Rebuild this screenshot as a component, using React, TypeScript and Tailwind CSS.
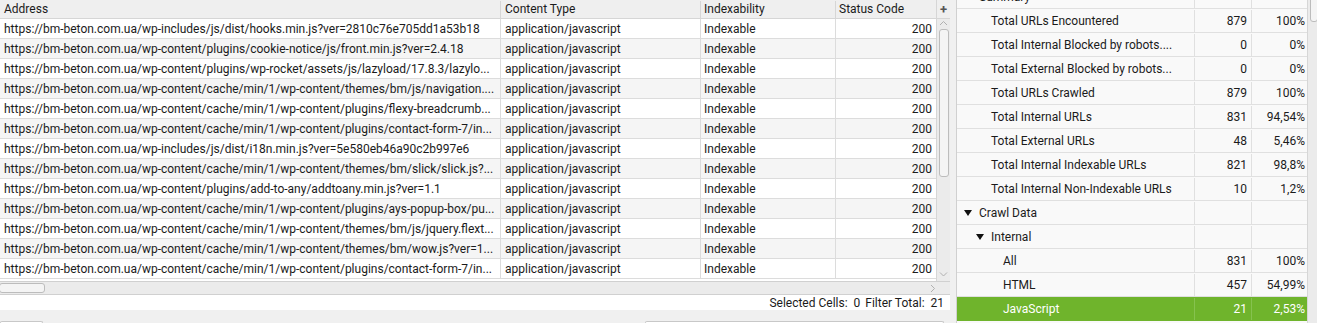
const urls = [
  "https://bm-beton.com.ua/wp-includes/js/dist/hooks.min.js?ver=2810c76e705dd1a53b18",
  "https://bm-beton.com.ua/wp-content/plugins/cookie-notice/js/front.min.js?ver=2.4.18",
  "https://bm-beton.com.ua/wp-content/plugins/wp-rocket/assets/js/lazyload/17.8.3/lazylo...",
  "https://bm-beton.com.ua/wp-content/cache/min/1/wp-content/themes/bm/js/navigation....",
  "https://bm-beton.com.ua/wp-content/cache/min/1/wp-content/plugins/flexy-breadcrumb...",
  "https://bm-beton.com.ua/wp-content/cache/min/1/wp-content/plugins/contact-form-7/in...",
  "https://bm-beton.com.ua/wp-includes/js/dist/i18n.min.js?ver=5e580eb46a90c2b997e6",
  "https://bm-beton.com.ua/wp-content/cache/min/1/wp-content/themes/bm/slick/slick.js?...",
  "https://bm-beton.com.ua/wp-content/plugins/add-to-any/addtoany.min.js?ver=1.1",
  "https://bm-beton.com.ua/wp-content/cache/min/1/wp-content/plugins/ays-popup-box/pu...",
  "https://bm-beton.com.ua/wp-content/cache/min/1/wp-content/themes/bm/js/jquery.flext...",
  "https://bm-beton.com.ua/wp-content/cache/min/1/wp-content/themes/bm/wow.js?ver=1...",
  "https://bm-beton.com.ua/wp-content/cache/min/1/wp-content/plugins/contact-form-7/in...",
];

type TreeRow = {
  label: string;
  level: number;
  open?: boolean;
  count?: string;
  pct?: string;
  selected?: boolean;
};

const tree: TreeRow[] = [
  { label: "Summary", level: 0, open: true },
  { label: "Total URLs Encountered", level: 1, count: "879", pct: "100%" },
  { label: "Total Internal Blocked by robots....", level: 1, count: "0", pct: "0%" },
  { label: "Total External Blocked by robots...", level: 1, count: "0", pct: "0%" },
  { label: "Total URLs Crawled", level: 1, count: "879", pct: "100%" },
  { label: "Total Internal URLs", level: 1, count: "831", pct: "94,54%" },
  { label: "Total External URLs", level: 1, count: "48", pct: "5,46%" },
  { label: "Total Internal Indexable URLs", level: 1, count: "821", pct: "98,8%" },
  { label: "Total Internal Non-Indexable URLs", level: 1, count: "10", pct: "1,2%" },
  { label: "Crawl Data", level: 0, open: true },
  { label: "Internal", level: 1, open: true },
  { label: "All", level: 2, count: "831", pct: "100%" },
  { label: "HTML", level: 2, count: "457", pct: "54,99%" },
  { label: "JavaScript", level: 2, count: "21", pct: "2,53%", selected: true },
];

const Chevron = ({ dir }: { dir: "up" | "down" | "right" }) => {
  const d =
    dir === "up" ? "M1 5 L4.5 1.5 L8 5" : dir === "down" ? "M1 1.5 L4.5 5 L8 1.5" : "M2 1 L5.5 4.5 L2 8";
  return (
    <svg width="9" height={dir === "right" ? 9 : 7} viewBox={dir === "right" ? "0 0 9 9" : "0 0 9 7"}>
      <path d={d} fill="none" stroke="#b0b0b0" strokeWidth="1" />
    </svg>
  );
};

const Triangle = () => (
  <svg width="8" height="6" viewBox="0 0 8 6" className="shrink-0">
    <path d="M0 0 H8 L4 6 Z" fill="#111" />
  </svg>
);

const App = () => {
  return (
    <div className="w-[1317px] h-[323px] overflow-hidden bg-[#f0f0f0] flex font-['Roboto',sans-serif] text-[12px] text-[#1b1b1b]">
      {/* left: results table */}
      <div className="w-[950px] flex flex-col shrink-0">
        <div className="h-[281px] flex bg-white overflow-hidden">
          <div className="w-[936px] flex flex-col">
            <div className="h-[19px] flex bg-[#efefef] border-b border-[#d6d6d6] shrink-0 pt-[1px]">
              <div className="w-[501px] px-[4px] leading-[17px] border-r border-[#d6d6d6]">Address</div>
              <div className="w-[200px] px-[4px] leading-[17px] border-r border-[#d6d6d6]">Content Type</div>
              <div className="w-[135px] px-[3px] leading-[17px] border-r border-[#d6d6d6]">Indexability</div>
              <div className="flex-1 px-[3px] leading-[17px]">Status Code</div>
            </div>
            {urls.map((u, i) => (
              <div
                key={i}
                className={`h-[20px] shrink-0 flex border-b border-[#dcdcdc] ${i % 2 === 0 ? "bg-white" : "bg-[#f5f5f5]"}`}
              >
                <div className="w-[501px] px-[4px] pt-[2px] leading-[17px] whitespace-nowrap overflow-hidden border-r border-[#dcdcdc]">
                  {u}
                </div>
                <div className="w-[200px] px-[4px] pt-[2px] leading-[17px] border-r border-[#dcdcdc]">application/javascript</div>
                <div className="w-[135px] px-[3px] pt-[2px] leading-[17px] border-r border-[#dcdcdc]">Indexable</div>
                <div className="flex-1 px-[4px] pt-[2px] leading-[17px] text-right">200</div>
              </div>
            ))}
          </div>
          <div className="w-[14px] flex flex-col bg-[#ebebeb] border-l border-[#d6d6d6]">
            <div className="h-[19px] bg-[#efefef] border-b border-[#d6d6d6] flex items-center justify-center text-[13px] font-bold text-[#555] leading-none">
              +
            </div>
            <div className="flex-1 flex flex-col items-center pt-[1px]">
              <Chevron dir="up" />
              <div className="mt-[2px] w-[10px] h-[148px] rounded-[3px] border border-[#bcbcbc] bg-[#f4f4f4]" />
              <div className="flex-1" />
              <div className="mb-[3px]">
                <Chevron dir="down" />
              </div>
            </div>
          </div>
        </div>
        <div className="h-[13px] bg-[#ebebeb] border-t border-[#d0d0d0] flex items-center justify-between pr-[12px]">
          <div className="w-[46px] h-[10px] -ml-[1px] rounded-[3px] border border-[#bcbcbc] bg-[#f4f4f4]" />
          <Chevron dir="right" />
        </div>
        <div className="h-[16px] bg-white border-t border-[#d0d0d0] flex items-center justify-end pr-[6px] leading-none gap-[5px]">
          <span>Selected Cells:&nbsp; 0</span>
          <span>Filter Total:&nbsp; 21</span>
        </div>
        <div className="flex-1 flex items-end justify-between">
          <div className="w-[43px] h-[2px] rounded-t-[3px] border border-b-0 border-[#c8c8c8] bg-white" />
          <div className="w-[299px] h-[2px] mr-[6px] rounded-t-[3px] border border-b-0 border-[#c8c8c8] bg-white" />
        </div>
      </div>

      {/* right: overview tree */}
      <div className="ml-[6px] flex-1 flex">
        <div className="w-[351px] border-l border-[#d0d0d0] bg-[#f9f9f9] overflow-hidden">
          <div className="-mt-[15px]">
            {tree.map((r, i) => (
              <div
                key={i}
                className={`h-[24px] flex border-b pt-[1px] ${
                  r.selected ? "bg-[#6fb42c] text-white border-[#6fb42c]" : "border-[#e0e0e0]"
                }`}
              >
                <div
                  className={`w-[238px] flex items-center border-r ${r.selected ? "border-[#86c24f]" : "border-[#e0e0e0]"}`}
                  style={{ paddingLeft: 7 + r.level * 12 }}
                >
                  {r.open !== undefined ? (
                    <>
                      <Triangle />
                      <span className="ml-[7px] whitespace-nowrap">{r.label}</span>
                    </>
                  ) : (
                    <span className="ml-[15px] whitespace-nowrap">{r.label}</span>
                  )}
                </div>
                <div
                  className={`w-[57px] flex items-center justify-end pr-[4px] border-r ${
                    r.selected ? "border-[#86c24f]" : "border-[#e0e0e0]"
                  }`}
                >
                  {r.count}
                </div>
                <div className="flex-1 flex items-center justify-end pr-[2px]">{r.pct}</div>
              </div>
            ))}
          </div>
        </div>
        <div className="flex-1 bg-[#ebebeb] border-l border-[#d6d6d6] relative">
          <div className="absolute left-[2px] -top-[4px] w-[8px] h-[26px] rounded-[3px] border border-[#bcbcbc] bg-[#f4f4f4]" />
        </div>
      </div>
    </div>
  );
};

export default App;
